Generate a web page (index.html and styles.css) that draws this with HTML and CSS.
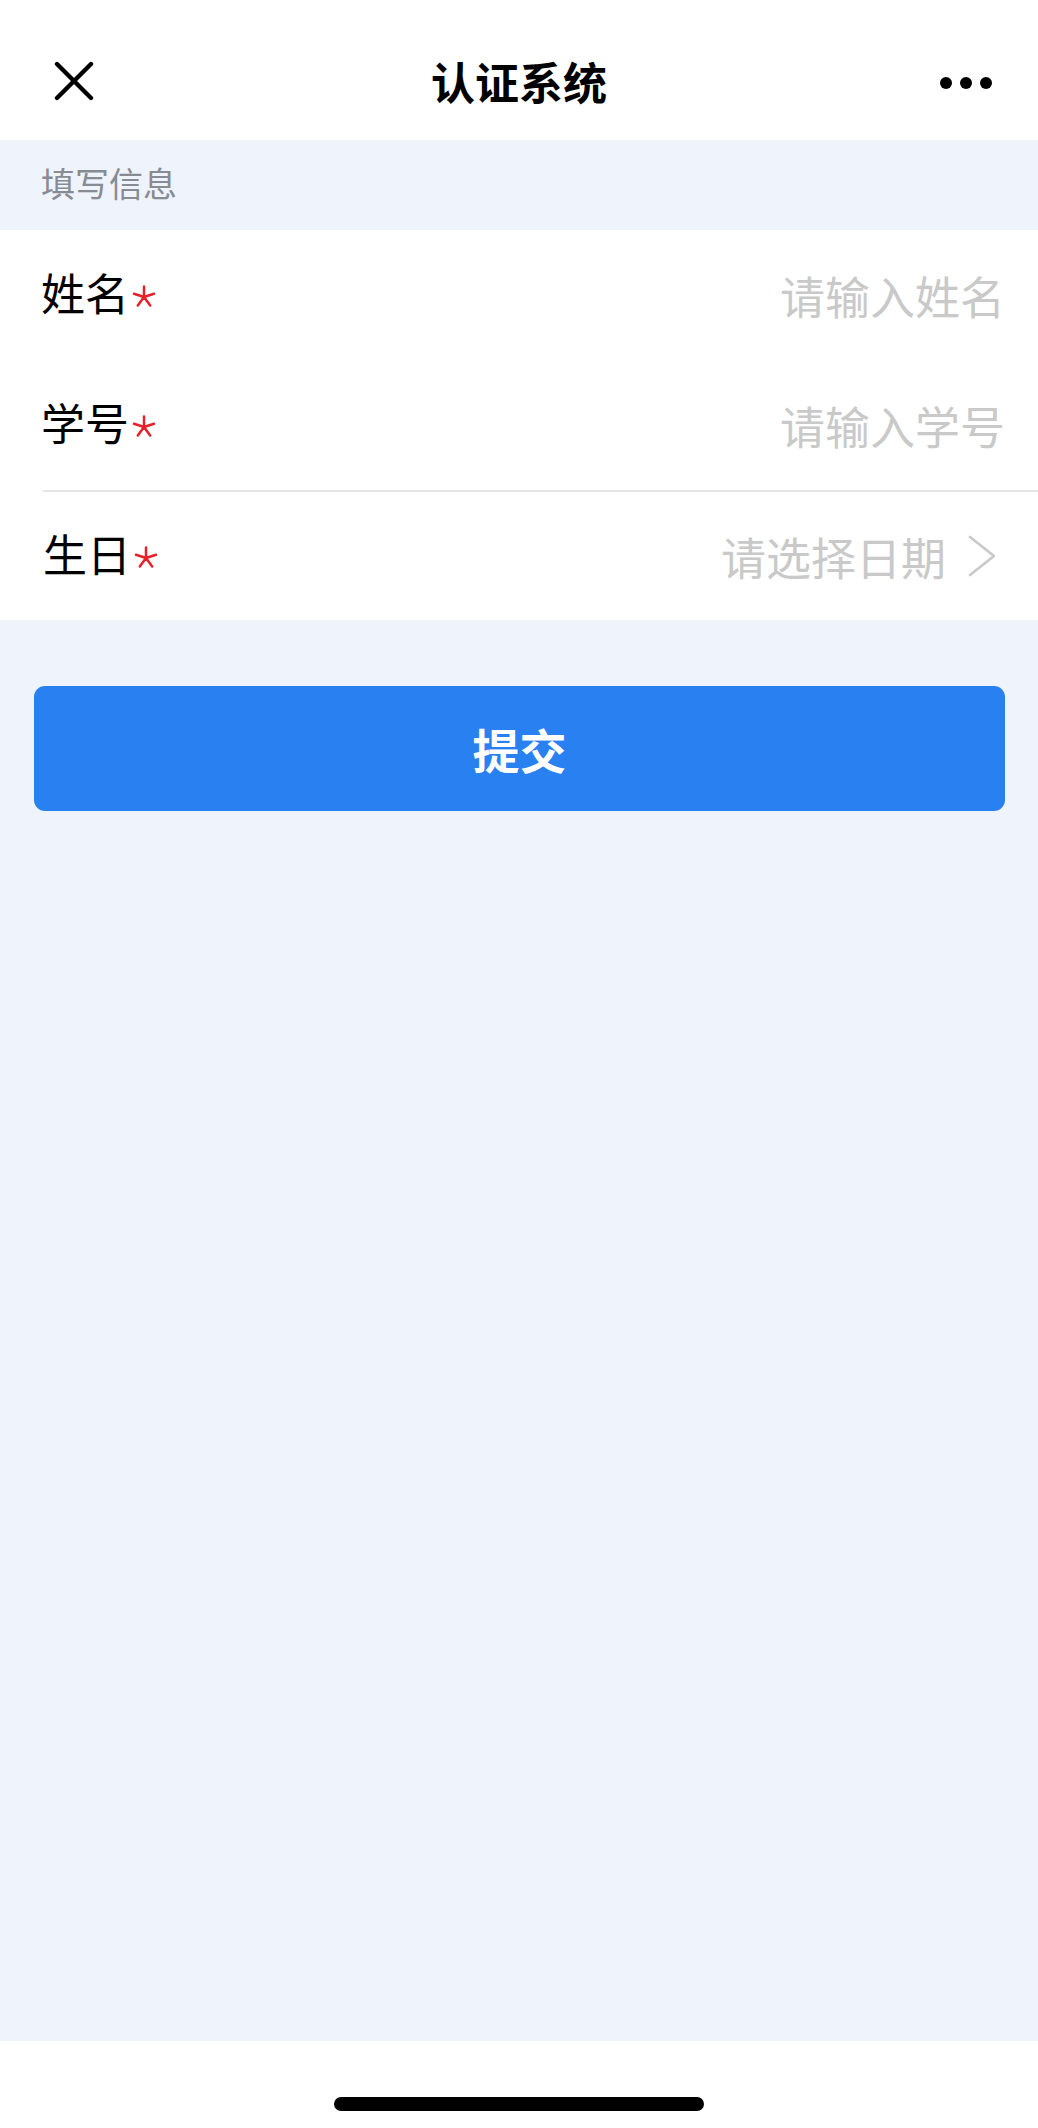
FILE: index.html
```html
<!DOCTYPE html>
<html lang="zh-CN">
<head>
  <meta charset="UTF-8">
  <meta name="viewport" content="width=device-width, initial-scale=1.0">
  <title>认证系统</title>
  <link rel="stylesheet" href="styles.css">
</head>
<body>
  <header class="nav-bar">
    <button class="nav-btn nav-close" aria-label="关闭">
      <svg width="40" height="40" viewBox="0 0 40 40">
        <path d="M3 3 L37 37 M37 3 L3 37" stroke="#000" stroke-width="4.4" stroke-linecap="round" fill="none"/>
      </svg>
    </button>
    <h1 class="nav-title">认证系统</h1>
    <button class="nav-btn nav-more" aria-label="更多">
      <span class="dot"></span><span class="dot"></span><span class="dot"></span>
    </button>
  </header>

  <main class="page">
    <div class="section-title">填写信息</div>

    <form class="form" id="authForm">
      <div class="form-row">
        <label class="form-label" for="name">姓名<svg class="req" width="24" height="24" viewBox="-12 -12 24 24"><path d="M0 0 L0 -10.5 M0 0 L10 -3.2 M0 0 L-10 -3.2 M0 0 L6.2 8.5 M0 0 L-6.2 8.5" stroke="#e8202a" stroke-width="2.5" stroke-linecap="round"/></svg></label>
        <input class="form-input" type="text" id="name" name="name" placeholder="请输入姓名">
      </div>
      <div class="form-row">
        <label class="form-label" for="sid">学号<svg class="req" width="24" height="24" viewBox="-12 -12 24 24"><path d="M0 0 L0 -10.5 M0 0 L10 -3.2 M0 0 L-10 -3.2 M0 0 L6.2 8.5 M0 0 L-6.2 8.5" stroke="#e8202a" stroke-width="2.5" stroke-linecap="round"/></svg></label>
        <input class="form-input" type="text" id="sid" name="sid" placeholder="请输入学号">
      </div>
      <div class="form-row form-row-divided">
        <label class="form-label">生日<svg class="req" width="24" height="24" viewBox="-12 -12 24 24"><path d="M0 0 L0 -10.5 M0 0 L10 -3.2 M0 0 L-10 -3.2 M0 0 L6.2 8.5 M0 0 L-6.2 8.5" stroke="#e8202a" stroke-width="2.5" stroke-linecap="round"/></svg></label>
        <div class="picker">
          <span class="picker-text">请选择日期</span>
          <svg class="chevron" width="28" height="42" viewBox="0 0 28 42">
            <path d="M2 2 L26 21 L2 40" stroke="#c9c9c9" stroke-width="2.6" fill="none" stroke-linecap="round" stroke-linejoin="round"/>
          </svg>
        </div>
      </div>
    </form>

    <div class="actions">
      <button type="submit" form="authForm" class="submit-btn">提交</button>
    </div>
  </main>

  <footer class="home-area">
    <div class="home-bar"></div>
  </footer>
</body>
</html>
```

FILE: styles.css
```css
* {
  box-sizing: border-box;
}
body {
  margin: 0;
  min-height: 100vh;
  display: flex;
  flex-direction: column;
  font-family: "Noto Sans CJK SC", "Noto Sans", sans-serif;
  background: #fff;
  color: #000;
}
.nav-bar {
  height: 140px;
  padding: 22px 46px 0 46px;
  display: flex;
  align-items: center;
  justify-content: space-between;
  background: #fff;
}
.nav-btn {
  width: 56px;
  height: 56px;
  padding: 0;
  border: none;
  background: none;
  display: flex;
  align-items: center;
  justify-content: flex-start;
}
.nav-close {
  padding-left: 8px;
}
.nav-more {
  justify-content: flex-end;
  gap: 8px;
  padding-top: 4px;
}
.dot {
  width: 12px;
  height: 12px;
  border-radius: 50%;
  background: #000;
}
.nav-title {
  margin: 0;
  font-size: 44px;
  font-weight: bold;
  line-height: 1;
}
.page {
  flex: 1;
  background: #eff3fb;
}
.section-title {
  height: 90px;
  padding-left: 41px;
  padding-bottom: 6px;
  display: flex;
  align-items: center;
  font-size: 34px;
  color: #878b93;
}
.form {
  background: #fff;
}
.form-row {
  height: 130px;
  padding: 0 33px 0 41px;
  display: flex;
  align-items: center;
  justify-content: space-between;
}
.form-row-divided {
  border-top: 2px solid #e6e6e6;
  margin-left: 43px;
  padding-left: 0;
  height: 130px;
}
.form-label {
  display: flex;
  align-items: center;
  font-size: 44px;
  white-space: nowrap;
  padding-bottom: 6px;
}
.req {
  margin-left: 3px;
  margin-top: 10px;
}
.form-input {
  flex: 1;
  min-width: 0;
  border: none;
  outline: none;
  text-align: right;
  font-family: "Noto Sans CJK SC", "Noto Sans", sans-serif;
  font-size: 45px;
  color: #000;
  background: transparent;
  padding: 0;
}
.form-input::placeholder {
  color: #c9c9c9;
}
.picker {
  display: flex;
  align-items: center;
  font-size: 45px;
  color: #c9c9c9;
}
.chevron {
  margin-left: 22px;
  margin-right: 9px;
}
.actions {
  padding: 66px 33px 0 34px;
}
.submit-btn {
  width: 100%;
  height: 125px;
  border: none;
  border-radius: 11px;
  background: #2980f1;
  color: #fff;
  font-family: "Noto Sans CJK SC", "Noto Sans", sans-serif;
  font-size: 47px;
  font-weight: bold;
  cursor: pointer;
}
.home-area {
  height: 87px;
  background: #fff;
  display: flex;
  justify-content: center;
  padding-top: 56px;
}
.home-bar {
  width: 370px;
  height: 14px;
  border-radius: 7px;
  background: #000;
}
```
